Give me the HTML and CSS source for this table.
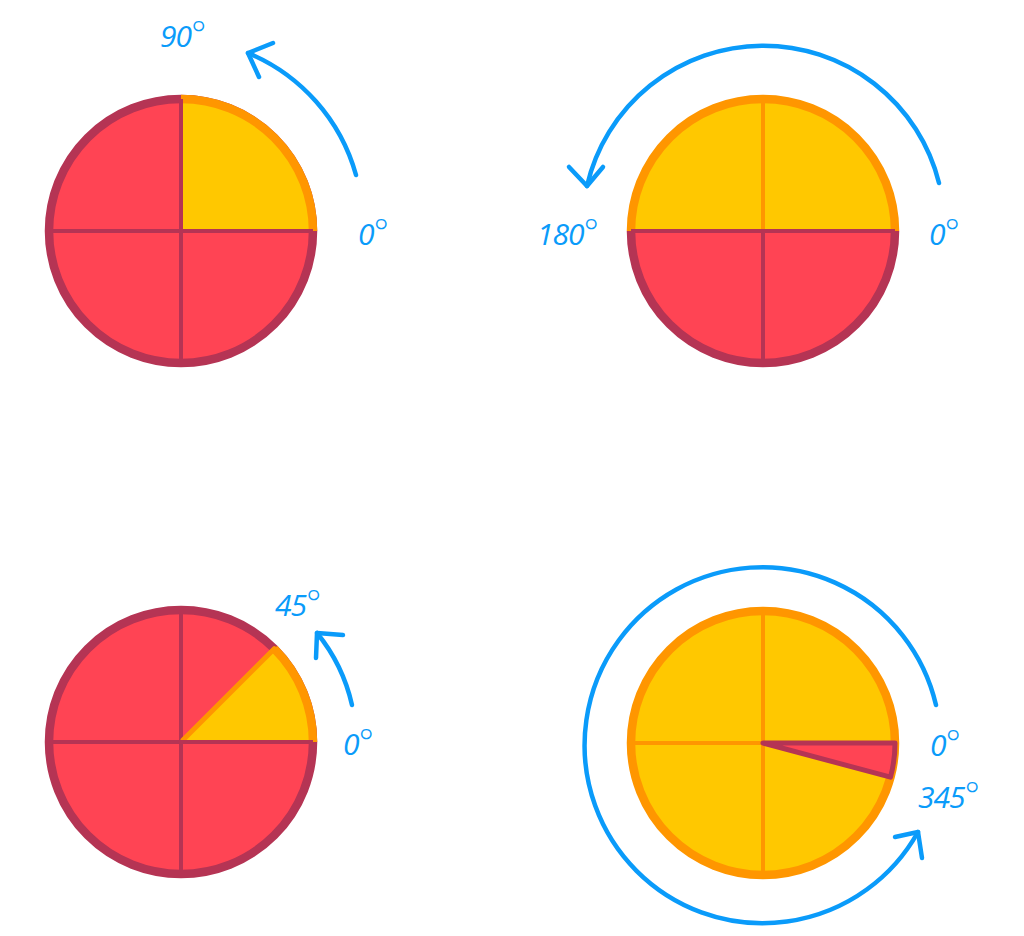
FILE: index.html
```html
<!DOCTYPE html>
<html lang="en">
<head>
<meta charset="utf-8">
<title>Angles</title>
<link rel="stylesheet" href="styles.css">
</head>
<body>
<svg class="canvas" width="1024" height="936" viewBox="0 0 1024 936" xmlns="http://www.w3.org/2000/svg">
  <!-- Figure 1: 90 degrees -->
  <g>
    <circle class="red-fill dark-stroke" cx="181" cy="231" r="132"/>
    <path class="yellow-fill" d="M181,231 L313,231 A132,132 0 0 0 181,99 Z"/>
    <path class="orange-stroke" d="M313,231 A132,132 0 0 0 181,99"/>
    <path class="dark-line" d="M49,231 H313 M181,99 V363"/>
    <path class="blue" d="M356,175 A186,186 0 0 0 248,53"/>
    <path class="blue" d="M273,43 L248,53 L259,77"/>
    <text class="label" x="160" y="47">90<tspan class="deg">°</tspan></text>
    <text class="label" x="358" y="245">0<tspan class="deg">°</tspan></text>
  </g>

  <!-- Figure 2: 180 degrees -->
  <g>
    <path class="yellow-fill" d="M631,231 A132,132 0 0 1 895,231 Z"/>
    <path class="orange-stroke" d="M631,231 A132,132 0 0 1 895,231"/>
    <path class="red-fill" d="M631,231 A132,132 0 0 0 895,231 Z"/>
    <path class="dark-stroke nofill" d="M631,231 A132,132 0 0 0 895,231"/>
    <path class="orange-line" d="M763,99 V231"/>
    <path class="dark-line" d="M763,231 V363 M631,231 H895"/>
    <path class="blue" d="M939,183 A181,181 0 0 0 587,186"/>
    <path class="blue" d="M569,167 L587,186 L603,167"/>
    <text class="label" x="537" y="245">180<tspan class="deg">°</tspan></text>
    <text class="label" x="929" y="245">0<tspan class="deg">°</tspan></text>
  </g>

  <!-- Figure 3: 45 degrees -->
  <g>
    <circle class="red-fill dark-stroke" cx="181" cy="742" r="132"/>
    <path class="dark-line" d="M181,610 V874"/>
    <path class="yellow-fill" d="M181,742 L313,742 A132,132 0 0 0 274.3,648.7 Z"/>
    <path class="orange-stroke" d="M313,742 A132,132 0 0 0 274.3,648.7"/>
    <path class="orange-radial" d="M183,740 L274.3,648.7"/>
    <path class="dark-line" d="M49,742 H313"/>
    <path class="blue" d="M352,705 A175,175 0 0 0 317,633"/>
    <path class="blue" d="M343,635 L317,633 L316,658"/>
    <text class="label" x="275" y="616">45<tspan class="deg">°</tspan></text>
    <text class="label" x="343" y="755">0<tspan class="deg">°</tspan></text>
  </g>

  <!-- Figure 4: 345 degrees -->
  <g>
    <circle class="yellow-fill orange-stroke" cx="763" cy="743" r="132"/>
    <path class="orange-line" d="M631,743 H895 M763,611 V875"/>
    <path class="red-fill wedge-stroke" d="M763,743 L895,743 A132,132 0 0 1 890.5,777.2 Z"/>
    <path class="blue" d="M936,705 A178,178 0 1 0 918,832"/>
    <path class="blue" d="M895,837 L918,832 L922,858"/>
    <text class="label" x="930" y="756">0<tspan class="deg">°</tspan></text>
    <text class="label" x="918" y="808">345<tspan class="deg">°</tspan></text>
  </g>
</svg>
</body>
</html>
```

FILE: styles.css
```css
html, body {
  margin: 0;
  padding: 0;
  background: #ffffff;
}

.canvas {
  display: block;
}

.red-fill {
  fill: #ff4454;
}

.yellow-fill {
  fill: #ffc800;
}

.nofill {
  fill: none;
}

.dark-stroke {
  stroke: #b53454;
  stroke-width: 8.5;
}

.orange-stroke {
  stroke: #ff9600;
  stroke-width: 8.5;
  fill: none;
}

circle.orange-stroke {
  fill: #ffc800;
}

.orange-radial {
  stroke: #ff9600;
  stroke-width: 5;
  stroke-linecap: round;
  fill: none;
}

.dark-line {
  stroke: #b53454;
  stroke-width: 4;
  fill: none;
}

.orange-line {
  stroke: #ff9600;
  stroke-width: 4;
  fill: none;
}

.wedge-stroke {
  stroke: #b53454;
  stroke-width: 5;
  stroke-linejoin: round;
}

.blue {
  stroke: #0a9bfa;
  stroke-width: 4.5;
  stroke-linecap: round;
  stroke-linejoin: round;
  fill: none;
}

.label {
  font-family: "Open Sans", "Liberation Sans", sans-serif;
  font-style: italic;
  font-weight: 400;
  font-size: 30px;
  letter-spacing: -1px;
  fill: #0a9bfa;
}

.deg {
  font-size: 36px;
  font-weight: 300;
}
```
